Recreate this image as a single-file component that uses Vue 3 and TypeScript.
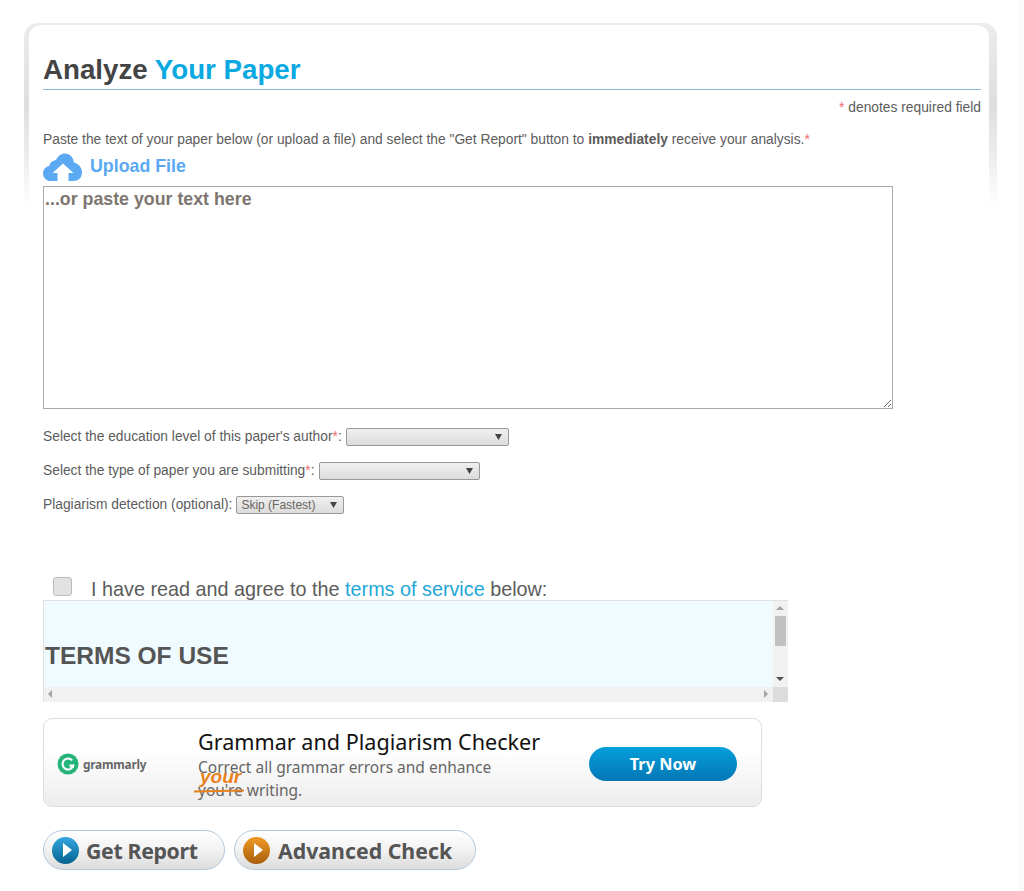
<script setup lang="ts">
const selects = [
  { label: "Select the education level of this paper's author", required: true, width: 163, value: '' },
  { label: 'Select the type of paper you are submitting', required: true, width: 161, value: '' },
  { label: 'Plagiarism detection (optional)', required: false, width: 108, value: 'Skip (Fastest)' },
]
</script>

<template>
  <div class="page">
    <div class="frame" aria-hidden="true"></div>
    <div class="edge" aria-hidden="true"></div>
    <main class="content">
      <h1 class="title">Analyze <span class="accent">Your Paper</span></h1>
      <p class="required"><span class="star">*</span> denotes required field</p>
      <p class="intro">
        Paste the text of your paper below (or upload a file) and select the "Get Report" button to
        <b>immediately</b> receive your analysis.<span class="star">*</span>
      </p>
      <div class="upload">
        <svg class="cloud" viewBox="0 0 39 28" width="39" height="28">
          <path fill="#5aa9f2" d="M8 28C3.500 28 0 24.600 0 20.400 0 16.600 2.700 13.500 6.400 13 7.200 9.500 9.800 7.300 12.800 7.300 14.900 2.900 18.200 0.500 21.800 0.500 26.900 0.500 30.500 4.500 30.900 9.600 35.600 11 39 14.500 39 19.500 39 24.500 35.300 28 30.500 28Z" />
          <path fill="#fff" d="M20 10.500 30.500 20 25.500 20 25.500 28 14.500 28 14.500 20 9.500 20Z" />
        </svg>
        <span>Upload File</span>
      </div>
      <textarea class="paper" placeholder="...or paste your text here"></textarea>

      <div class="fields">
        <div v-for="s in selects" :key="s.label" class="field">
          <label>{{ s.label }}<span v-if="s.required" class="star">*</span>:</label>
          <select class="pick" :style="{ width: s.width + 'px' }">
            <option>{{ s.value }}</option>
          </select>
        </div>
      </div>

      <div class="agree">
        <input type="checkbox" class="check" />
        <span>I have read and agree to the <a class="link">terms of service</a> below:</span>
      </div>

      <section class="terms">
        <div class="terms-body"><h2>TERMS OF USE</h2></div>
        <div class="vbar">
          <i class="arrow up"></i>
          <i class="thumb"></i>
          <i class="arrow down"></i>
        </div>
        <div class="hbar">
          <i class="arrow left"></i>
          <i class="arrow right"></i>
        </div>
        <div class="corner"></div>
      </section>

      <aside class="ad">
        <div class="brand">
          <svg viewBox="0 0 22 22" width="22" height="22">
            <circle cx="11" cy="11" r="10.500" fill="#25b47a" />
            <path fill="none" stroke="#fff" stroke-width="2" d="M15.200 7.400A5.500 5.500 0 1 0 16.400 12.500H12.500" />
            <path fill="#fff" d="M12 14.300 16.800 11.500 16.800 15Z" />
          </svg>
          <span>grammarly</span>
        </div>
        <div class="pitch">
          <div class="pitch-title">Grammar and Plagiarism Checker</div>
          <div class="pitch-line">Correct all grammar errors and enhance</div>
          <div class="pitch-line second">
            <span class="fix"><s>you're</s><em>your</em></span> writing.
          </div>
        </div>
        <button class="try">Try Now</button>
      </aside>

      <div class="actions">
        <button class="pill report">
          <span class="disc blue"><i></i></span>Get Report
        </button>
        <button class="pill advanced">
          <span class="disc orange"><i></i></span>Advanced Check
        </button>
      </div>
    </main>
  </div>
</template>

<style>
html,
body {
  margin: 0;
  background: #fff;
}
</style>

<style scoped>
.page {
  position: relative;
  box-sizing: border-box;
  height: 891px;
  padding: 52px 43px 0;
  overflow: hidden;
  font-family: "Liberation Sans", Arial, sans-serif;
  color: #5c5c5c;
  background: #fff;
}
.frame {
  position: absolute;
  left: 24px;
  top: 23px;
  width: 973px;
  height: 185px;
  border-radius: 14px 14px 0 0;
  background: linear-gradient(#ececec, #dedede 45%, #f3f3f3 82%, #fff);
}
.frame::after {
  content: "";
  position: absolute;
  left: 5px;
  top: 2px;
  width: 960px;
  height: 183px;
  border-radius: 12px 12px 0 0;
  background: #fff;
}
.edge {
  position: absolute;
  top: 0;
  right: 0;
  width: 5px;
  height: 100%;
  background: #fbfbfb;
}
.content {
  position: relative;
  width: 938px;
}
.title {
  margin: 0;
  height: 37px;
  border-bottom: 1px solid #8cb8d4;
  font-size: 27.700px;
  line-height: 36px;
  font-weight: 700;
  color: #444;
}
.accent {
  color: #0aa9e2;
}
.required {
  margin: 9px 0 0;
  text-align: right;
  font-size: 13.800px;
  line-height: 17px;
}
.star {
  color: #f06a6a;
}
.intro {
  margin: 15px 0 0;
  font-size: 13.800px;
  line-height: 17px;
  white-space: nowrap;
}
.upload {
  display: flex;
  align-items: center;
  gap: 8px;
  margin-top: 5px;
  height: 30px;
  font-size: 17.800px;
  font-weight: 700;
  color: #5aa9f2;
}
.cloud {
  margin-bottom: 3px;
}
.upload span {
  margin-bottom: 3px;
}
.paper {
  display: block;
  box-sizing: border-box;
  width: 850px;
  height: 223px;
  margin-top: 3px;
  padding: 2px 1px;
  border: 1px solid #a9a9a9;
  border-radius: 0;
  outline: none;
  font-family: inherit;
  font-size: 17.800px;
  font-weight: 700;
}
.paper::placeholder {
  color: #7d7670;
  opacity: 1;
}
.fields {
  display: flex;
  flex-direction: column;
  gap: 16px;
  margin-top: 19px;
}
.field {
  display: flex;
  align-items: center;
  gap: 4px;
  height: 18px;
  font-size: 13.800px;
  line-height: 18px;
}
.pick {
  box-sizing: border-box;
  height: 18px;
  padding: 0 0 0 4px;
  appearance: none;
  border: 1px solid #999;
  border-radius: 2px;
  font-family: inherit;
  font-size: 12px;
  color: #6b655f;
  background: url("data:image/svg+xml,%3Csvg xmlns='http://www.w3.org/2000/svg' width='7' height='6'%3E%3Cpath fill='%23444' d='M0 0h7L3.500 6z'/%3E%3C/svg%3E") no-repeat right 6px center, linear-gradient(#f0f0f0, #dcdcdc);
}
.agree {
  display: flex;
  align-items: flex-start;
  gap: 19px;
  height: 24px;
  margin-top: 62px;
  padding-left: 10px;
  font-size: 19.800px;
  line-height: 24px;
}
.check {
  box-sizing: border-box;
  width: 19px;
  height: 19px;
  margin: 1px 0 0;
  appearance: none;
  border: 1px solid #bbb;
  border-radius: 3px;
  background: #e2e2e2;
}
.agree span {
  margin-top: 1px;
}
.link {
  color: #1ea7d8;
}
.terms {
  display: grid;
  grid-template-columns: 729px 15px;
  grid-template-rows: 86px 15px;
  box-sizing: border-box;
  width: 745px;
  height: 102px;
  border: 1px solid #e0e0e0;
  border-right: 0;
  border-bottom: 0;
}
.terms-body {
  display: flex;
  align-items: flex-end;
  padding: 0 1px 17px;
  background: #f0fbff;
}
.terms-body h2 {
  margin: 0;
  font-size: 24.500px;
  line-height: 28px;
  font-weight: 700;
  color: #555;
}
.vbar {
  position: relative;
  background: #f1f1f1;
}
.thumb {
  position: absolute;
  left: 2px;
  top: 15px;
  width: 11px;
  height: 30px;
  background: #c1c1c1;
}
.arrow {
  position: absolute;
  width: 0;
  height: 0;
  border: 4px solid transparent;
}
.arrow.up {
  left: 3px;
  top: 1px;
  border-bottom-color: #a3a3a3;
}
.arrow.down {
  left: 3px;
  bottom: 2px;
  border-top-color: #505050;
}
.hbar {
  position: relative;
  background: #f1f1f1;
}
.arrow.left {
  left: 0;
  top: 3px;
  border-right-color: #a3a3a3;
}
.arrow.right {
  right: 1px;
  top: 3px;
  border-left-color: #a3a3a3;
}
.corner {
  background: #dcdcdc;
}
.ad {
  display: flex;
  align-items: stretch;
  box-sizing: border-box;
  width: 719px;
  height: 89px;
  margin-top: 16px;
  border: 1px solid #dedede;
  border-radius: 9px;
  font-family: "Noto Sans", "Open Sans", sans-serif;
  background: linear-gradient(#fff 35%, #ededed);
}
.brand {
  display: flex;
  align-items: center;
  gap: 4px;
  width: 154px;
  padding: 3px 0 0 13px;
  box-sizing: border-box;
  font-family: "Noto Sans", sans-serif;
  font-size: 11.800px;
  font-weight: 700;
  letter-spacing: -0.200px;
  color: #666;
}
.pitch {
  width: 391px;
  padding-top: 9px;
  color: #666;
}
.pitch-title {
  font-size: 21.600px;
  line-height: 28px;
  color: #111;
  white-space: nowrap;
}
.pitch-line {
  font-size: 15.500px;
  line-height: 22px;
  white-space: nowrap;
}
.pitch-line.second {
  margin-top: 1px;
}
.fix {
  position: relative;
  display: inline-block;
}
.fix s {
  text-decoration: none;
}
.fix::after {
  content: "";
  position: absolute;
  left: -4px;
  right: -1px;
  top: 11px;
  height: 2px;
  background: #e8811c;
  transform: rotate(-1deg);
}
.fix em {
  position: absolute;
  left: 2px;
  top: -13px;
  font-family: "Liberation Sans", sans-serif;
  font-size: 19px;
  font-style: italic;
  font-weight: 700;
  color: #e8811c;
}
.try {
  align-self: flex-start;
  width: 148px;
  height: 34px;
  margin-top: 28px;
  padding: 0;
  border: 0;
  border-radius: 17px;
  font-family: inherit;
  font-size: 16.300px;
  font-weight: 700;
  color: #fff;
  background: linear-gradient(#059fdb, #0477b5);
}
.actions {
  display: flex;
  gap: 9px;
  margin-top: 23px;
}
.pill {
  display: flex;
  align-items: center;
  gap: 7px;
  box-sizing: border-box;
  height: 40px;
  padding: 0 0 0 8px;
  border: 1px solid #b4c9de;
  border-radius: 20px;
  font-family: "Noto Sans", "Open Sans", sans-serif;
  font-size: 21.300px;
  font-weight: 700;
  letter-spacing: -0.150px;
  color: #555;
  background: linear-gradient(#fff, #f2f2f2 50%, #dcdcdc);
}
.report {
  width: 182px;
  letter-spacing: -0.350px;
}
.advanced {
  width: 242px;
  gap: 8px;
  letter-spacing: 0;
}
.disc {
  display: flex;
  align-items: center;
  justify-content: center;
  width: 27px;
  height: 27px;
  border-radius: 50%;
}
.disc i {
  width: 0;
  height: 0;
  margin-left: 3px;
  border-left: 9px solid #fff;
  border-top: 7px solid transparent;
  border-bottom: 7px solid transparent;
}
.blue {
  background: linear-gradient(#35a8e0, #06618f);
}
.orange {
  background: linear-gradient(#f09a24, #a85e0c);
}
</style>
